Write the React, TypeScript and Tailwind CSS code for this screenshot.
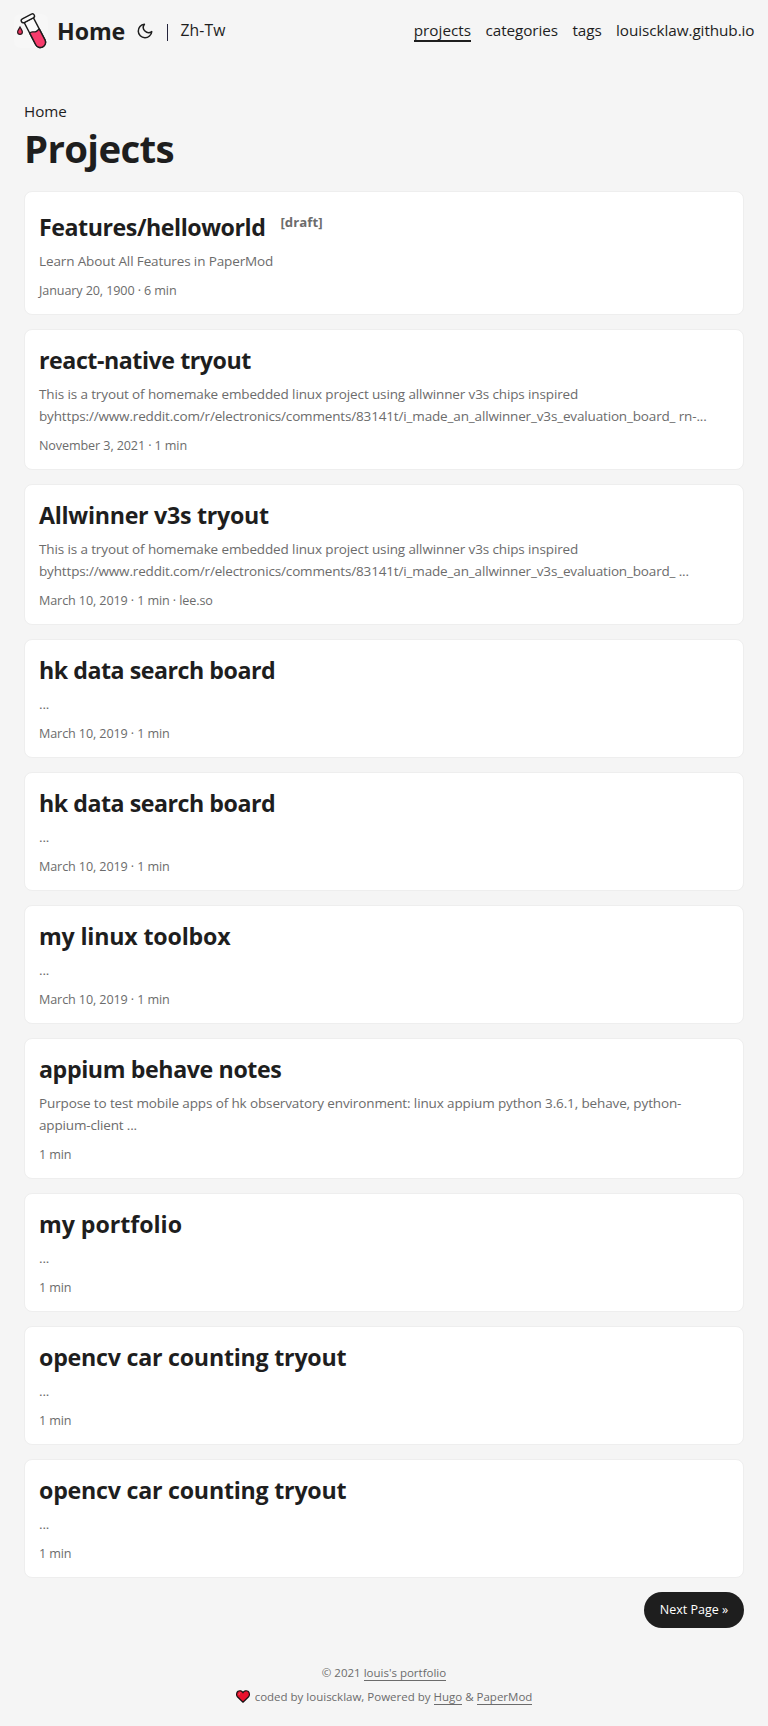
type Post = {
  title: string;
  tracking: string;
  summary: string[];
  meta: string;
  draft?: boolean;
};

const tryout = 'This is a tryout of homemake embedded linux project using allwinner v3s chips inspired';
const reddit = 'byhttps://www.reddit.com/r/electronics/comments/83141t/i_made_an_allwinner_v3s_evaluation_board_';

const posts: Post[] = [
  { title: 'Features/helloworld', tracking: 'tracking-[-0.45px]', summary: ['Learn About All Features in PaperMod'], meta: 'January 20, 1900 · 6 min', draft: true },
  { title: 'react-native tryout', tracking: 'tracking-[-0.45px]', summary: [tryout, `${reddit} rn-...`], meta: 'November 3, 2021 · 1 min' },
  { title: 'Allwinner v3s tryout', tracking: 'tracking-[-0.27px]', summary: [tryout, `${reddit} ...`], meta: 'March 10, 2019 · 1 min · lee.so' },
  { title: 'hk data search board', tracking: 'tracking-[-0.47px]', summary: ['...'], meta: 'March 10, 2019 · 1 min' },
  { title: 'hk data search board', tracking: 'tracking-[-0.47px]', summary: ['...'], meta: 'March 10, 2019 · 1 min' },
  { title: 'my linux toolbox', tracking: 'tracking-[-0.18px]', summary: ['...'], meta: 'March 10, 2019 · 1 min' },
  {
    title: 'appium behave notes',
    tracking: 'tracking-[-0.39px]',
    summary: ['Purpose to test mobile apps of hk observatory environment: linux appium python 3.6.1, behave, python-', 'appium-client ...'],
    meta: '1 min',
  },
  { title: 'my portfolio', tracking: 'tracking-[-0.04px]', summary: ['...'], meta: '1 min' },
  { title: 'opencv car counting tryout', tracking: 'tracking-[-0.23px]', summary: ['...'], meta: '1 min' },
  { title: 'opencv car counting tryout', tracking: 'tracking-[-0.23px]', summary: ['...'], meta: '1 min' },
];

function Logo() {
  return (
    <svg className="h-[34px] w-[34px] shrink-0 rounded-md bg-[#f7f7f7]" viewBox="0 0 34 34" overflow="visible">
      <g transform="translate(13.8 4.2) rotate(-27.5)" stroke="#1c1c1c" strokeWidth="1.4" strokeLinejoin="round">
        <path d="M-5.2 2V27.2A5.2 5.2 0 0 0 5.2 27.2V2Z" fill="#fafafa" />
        <path d="M-5.2 14.2C-2.6 12.8-1.6 15.4 1 15.6C2.8 15.8 3.6 14.8 5.2 15V27.2A5.2 5.2 0 0 1-5.2 27.2Z" fill="#f73c6c" />
        <rect x="-7.2" y="-2" width="14.4" height="4.2" rx="2.1" fill="#fafafa" />
      </g>
      <path d="M6 13C7 15 8.4 16.4 8.4 18A2.4 2.4 0 0 1 3.6 18C3.6 16.4 5 15 6 13Z" fill="#e8305c" stroke="#2a1a1e" strokeWidth="1.2" />
    </svg>
  );
}

function Header() {
  return (
    <header className="flex h-[62px] items-center justify-between pl-[14px] pr-[13.5px] text-[15.3px]">
      <div className="flex items-center">
        <Logo />
        <a className="ml-[9px] text-[23.2px] font-bold leading-[62px] tracking-[-0.1px]">Home</a>
        <svg className="ml-[11px] h-[18px] w-[18px]" viewBox="0 0 24 24" fill="none" stroke="#1e1e1e" strokeWidth="2" strokeLinecap="round" strokeLinejoin="round">
          <path d="M21 12.79A9 9 0 1 1 11.21 3 7 7 0 0 0 21 12.79z" />
        </svg>
        <span className="ml-[12.5px] mt-[2px] h-[17px] w-px bg-[#24243c]" />
        <a className="ml-[12.8px] text-[15.7px] font-medium tracking-[0.15px]">Zh-Tw</a>
      </div>
      <nav className="flex items-start gap-[14.5px] leading-[20px]">
        <a className="border-b-2 border-[#1e1e1e] font-medium">projects</a>
        <a className="tracking-[-0.1px]">categories</a>
        <a className="tracking-[-0.1px]">tags</a>
        <a className="tracking-[-0.08px]">louiscklaw.github.io</a>
      </nav>
    </header>
  );
}

function Card({ post }: { post: Post }) {
  return (
    <article className={`rounded-lg border border-[#eeeeee] bg-white px-[14px] pb-[15px] ${post.draft ? 'pt-[22px]' : 'pt-[17px]'}`}>
      <h2 className={`flex h-[26px] items-center whitespace-nowrap text-[23.2px] font-bold leading-[26px] ${post.tracking}`}>
        {post.title}
        {post.draft && <sup className="top-0 ml-[15px] mb-[9px] text-[13.2px] leading-none tracking-[0.05px] text-[#6c6c6c]">[draft]</sup>}
      </h2>
      <p className="mt-[10px] whitespace-nowrap text-[13.5px] leading-[22px] text-[#6c6c6c]">
        {post.summary.map((line, i) => (
          <span key={i} className={`block ${i === 0 ? 'tracking-[-0.125px]' : 'tracking-[-0.156px]'}`}>
            {line}
          </span>
        ))}
      </p>
      <p className="mt-[11px] text-[12.6px] leading-4 tracking-[-0.11px] text-[#6c6c6c]">{post.meta}</p>
    </article>
  );
}

export default function App() {
  return (
    <div className="h-[1726px] overflow-hidden bg-[#f5f5f5] font-['Open_Sans','Noto_Sans',sans-serif] text-[#1e1e1e]">
      <Header />
      <main className="px-6">
        <div className="mt-[37px] text-[15.2px] leading-[24px] tracking-[-0.05px]">Home</div>
        <h1 className="mt-[2px] text-[38.4px] font-bold leading-[46px] tracking-[-0.65px]">Projects</h1>
        <div className="mt-5 flex flex-col gap-[14px]">
          {posts.map((post, i) => (
            <Card key={i} post={post} />
          ))}
        </div>
        <div className="mt-[14px] flex justify-end">
          <a className="flex h-9 w-[100px] items-center justify-center rounded-full bg-[#1e1e1e] pt-px text-[12.5px] text-white">Next Page »</a>
        </div>
      </main>
      <footer className="mt-8 flex flex-col items-center text-[11.5px] text-[#6c6c6c]">
        <div className="flex h-[25px] items-center whitespace-pre leading-[15px]">
          <span>© 2021 </span>
          <a className="border-b border-[#6c6c6c]">louis's portfolio</a>
        </div>
        <div className="flex h-[23px] items-center whitespace-pre leading-[15px]">
          <svg className="mr-[5px] h-[13px] w-[14px]" viewBox="0 0 14 13">
            <path d="M7 12.2L1.4 6.8C.2 5.4.3 2.6 2 1.3C3.8.2 6 .9 7 2.8C8 .9 10.2.2 12 1.3C13.7 2.6 13.8 5.4 12.6 6.8Z" fill="#e8112d" stroke="#1a1012" strokeWidth="1.2" strokeLinejoin="round" />
            <path d="M3 5C2.9 3.6 3.5 2.8 4.6 2.7" fill="none" stroke="#f4606c" strokeWidth="1" />
          </svg>
          <span>coded by louiscklaw, Powered by </span>
          <a className="border-b border-[#6c6c6c]">Hugo</a>
          <span> &amp; </span>
          <a className="border-b border-[#6c6c6c]">PaperMod</a>
        </div>
      </footer>
    </div>
  );
}
